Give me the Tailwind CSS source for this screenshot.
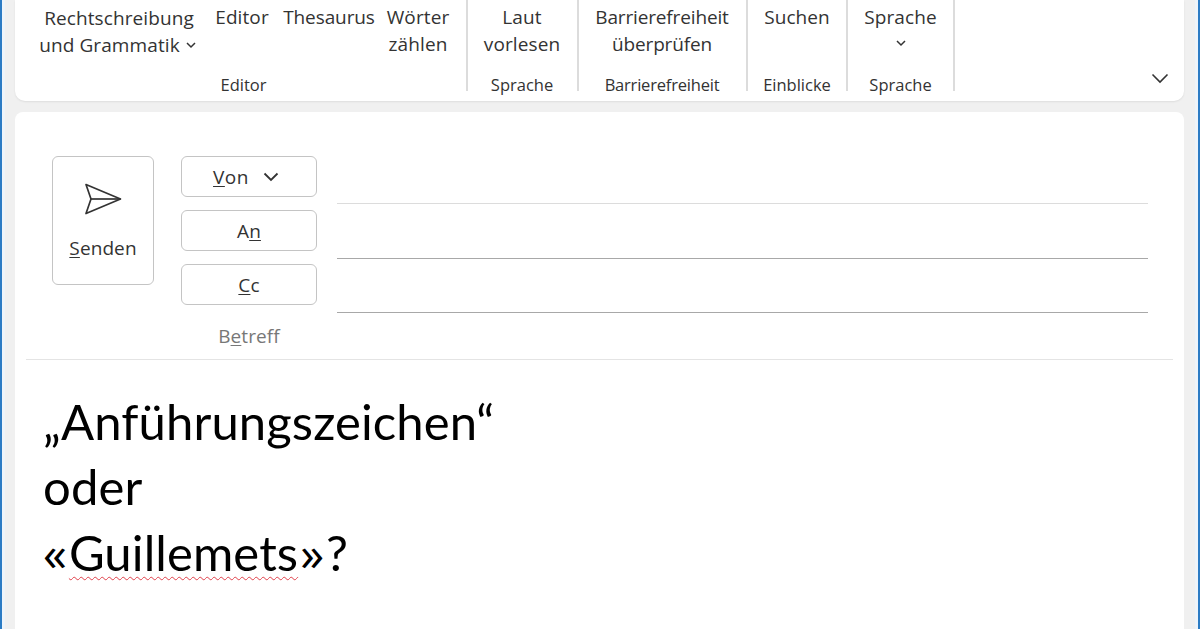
<!DOCTYPE html>
<html lang="de">
<head>
  <meta charset="UTF-8">
  <title>Outlook - Neue E-Mail</title>
  <script src="https://cdn.jsdelivr.net/npm/@tailwindcss/browser@4"></script>
</head>
<body class="h-[629px] w-[1200px] overflow-hidden bg-[#f0f0f0]">
<div class="h-full border-x-2 border-[#2b7bc4]">
  <div class="h-full border-x-[3px] border-[#eef4fa] pl-[10px] pr-[11px] font-['Open_Sans',sans-serif] text-[#333]">

    <!-- ribbon -->
    <div class="relative flex h-[101px] rounded-b-[10px] bg-white text-[19px] leading-[27px] tracking-[0.1px] shadow-[0_1px_2px_rgba(0,0,0,0.08)]">
      <div class="flex h-[91px] w-[453px] flex-col border-r-2 border-[#dcdcdc] pl-[14px] pr-[8px]">
        <div class="flex h-[79px] text-center">
          <div class="w-[180px] shrink-0 pt-[5px]">Rechtschreibung<br><span class="-ml-[3px]">und Grammatik</span>
            <svg class="mb-[3px] ml-[1px] inline" width="10" height="7" viewBox="0 0 10 7" fill="none" stroke="#333" stroke-width="1.5"><path d="M1 1l4 4 4-4"/></svg>
          </div>
          <div class="w-[66px] shrink-0 pt-[4px]">Editor</div>
          <div class="w-[108px] shrink-0 pt-[4px] tracking-[-0.1px]">Thesaurus</div>
          <div class="w-[70px] shrink-0 pt-[4px]">Wörter<br>zählen</div>
        </div>
        <div class="text-center text-[16.5px] leading-[12px] tracking-normal">Editor</div>
      </div>
      <div class="flex h-[91px] w-[111px] flex-col border-r-2 border-[#dcdcdc] pr-[1px] text-center">
        <div class="h-[79px] pt-[4px]">Laut<br>vorlesen</div>
        <div class="text-[16.5px] leading-[12px] tracking-normal">Sprache</div>
      </div>
      <div class="flex h-[91px] w-[169px] flex-col border-r-2 border-[#dcdcdc] pr-[1px] text-center">
        <div class="h-[79px] pt-[4px] tracking-[-0.15px]">Barrierefreiheit<br>überprüfen</div>
        <div class="text-[16.5px] leading-[12px] tracking-[-0.2px]">Barrierefreiheit</div>
      </div>
      <div class="flex h-[91px] w-[100px] flex-col border-r-2 border-[#dcdcdc] text-center">
        <div class="h-[79px] pt-[4px]">Suchen</div>
        <div class="text-[16.5px] leading-[12px] tracking-normal">Einblicke</div>
      </div>
      <div class="flex h-[91px] w-[107px] flex-col border-r-2 border-[#dcdcdc] text-center">
        <div class="h-[79px] pt-[4px]">Sprache
          <svg class="mx-auto mt-[9px]" width="10" height="7" viewBox="0 0 10 7" fill="none" stroke="#333" stroke-width="1.5"><path d="M1 1l4 4 4-4"/></svg>
        </div>
        <div class="text-[16.5px] leading-[12px] tracking-normal">Sprache</div>
      </div>
      <svg class="absolute right-[15px] top-[72px]" width="18" height="12" viewBox="0 0 18 12" fill="none" stroke="#333" stroke-width="1.6"><path d="M1.5 2.5l7.5 7.5 7.5-7.5"/></svg>
    </div>

    <!-- compose -->
    <div class="mt-[11px] h-[530px] rounded-t-[8px] bg-white px-[11px]">
      <div class="flex h-[248px] border-b border-[#e4e4e4] pl-[26px] pt-[44px]">
        <button class="flex h-[129px] w-[102px] flex-col items-center rounded-[6px] border border-[#c4c4c4] text-[19px] tracking-[0.1px]">
          <svg class="mt-[26px]" width="40" height="32" viewBox="0 0 40 32" fill="none" stroke="#333" stroke-width="1.7" stroke-linejoin="round"><path d="M3 1.5L37.5 16 3 30.5 8 16z"/><path d="M8 16H37.5"/></svg>
          <span class="mt-[20px] leading-[27px]"><span class="underline underline-offset-2">S</span>enden</span>
        </button>
        <div class="ml-[27px] flex w-[136px] flex-col gap-[13px] text-[19px] leading-[27px] tracking-[0.1px]">
          <button class="flex h-[41px] items-center justify-center rounded-[6px] border border-[#c4c4c4] pr-[6px]">
            <span class="translate-y-[1px] tracking-[0.5px]"><span class="underline underline-offset-2">V</span>on</span>
            <svg class="ml-[14px]" width="16" height="10" viewBox="0 0 16 10" fill="none" stroke="#333" stroke-width="1.8"><path d="M1.5 1.5l6.5 6.5 6.5-6.5"/></svg>
          </button>
          <button class="h-[41px] rounded-[6px] border border-[#c4c4c4]"><span class="relative top-[1px]">A<span class="underline underline-offset-2">n</span></span></button>
          <button class="h-[41px] rounded-[6px] border border-[#c4c4c4]"><span class="relative top-[1px]"><span class="underline underline-offset-2">C</span>c</span></button>
          <div class="mt-[5px] text-center text-[#777]">B<span class="underline underline-offset-2">e</span>treff</div>
        </div>
        <div class="ml-[20px] w-[811px]">
          <div class="h-[48px] border-b border-[#dcdcdc]"></div>
          <div class="h-[55px] border-b border-[#a8a8a8]"></div>
          <div class="h-[54px] border-b border-[#a8a8a8]"></div>
        </div>
      </div>
      <div class="pl-[17px] pt-[29px] font-['Lato',sans-serif] text-[49px] leading-[65px] tracking-[0.1px] text-black">
        <p class="h-[65px]">„Anführungszeichen“</p>
        <p class="h-[66px]">oder</p>
        <p class="h-[65px]"><span class="pr-[2px] font-['Open_Sans',sans-serif] text-[48px]">«</span><span class="underline decoration-[#e0404a] decoration-wavy decoration-1 underline-offset-[5px]">Guillemets</span><span class="pl-[2px] pr-[2px] font-['Open_Sans',sans-serif] text-[48px]">»</span>?</p>
      </div>
    </div>
  </div>
</div>
</body>
</html>
